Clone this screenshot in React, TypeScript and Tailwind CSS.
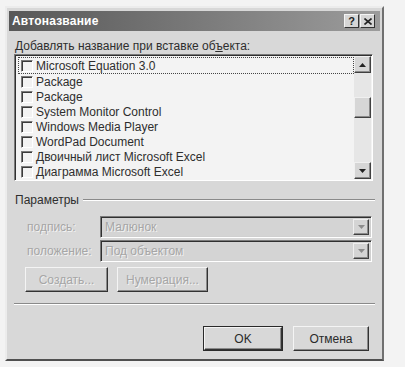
import React from "react";

const items = [
  "Microsoft Equation 3.0",
  "Package",
  "Package",
  "System Monitor Control",
  "Windows Media Player",
  "WordPad Document",
  "Двоичный лист Microsoft Excel",
  "Диаграмма Microsoft Excel",
];

function Check() {
  return (
    <span className="block w-[12px] h-[12px] shrink-0 border border-t-[#7a7a7a] border-l-[#7a7a7a] border-r-white border-b-white shadow-[inset_1px_1px_0_#3a3a3a] bg-[#f2f2f2]" />
  );
}

function ScrollBtn({ down }: { down?: boolean }) {
  return (
    <div className="h-[17px] w-[17px] flex items-center justify-center bg-[#d6d6d6] border border-t-[#f0f0f0] border-l-[#f0f0f0] border-r-[#404040] border-b-[#404040] shadow-[inset_-1px_-1px_0_#8a8a8a]">
      <svg width="7" height="4" viewBox="0 0 7 4">
        {down ? (
          <path d="M0 0H7L3.5 4Z" fill="#222" />
        ) : (
          <path d="M0 4H7L3.5 0Z" fill="#222" />
        )}
      </svg>
    </div>
  );
}

function Combo({ text }: { text: string }) {
  return (
    <div className="w-[272px] h-[22px] flex items-stretch border border-t-[#7a7a7a] border-l-[#7a7a7a] border-r-white border-b-white shadow-[inset_1px_1px_0_#303030,inset_-1px_-1px_0_#d0d0d0] bg-[#d4d4d4] p-[2px]">
      <span className="flex-1 pl-[2px] text-[#a6a6a6] leading-[16px] [text-shadow:1px_1px_0_#f2f2f2]">{text}</span>
      <div className="w-[16px] flex items-center justify-center border border-t-[#efefef] border-l-[#efefef] border-r-[#404040] border-b-[#404040] shadow-[inset_-1px_-1px_0_#8a8a8a]">
        <svg width="7" height="4" viewBox="0 0 7 4">
          <path d="M0 0H7L3.5 4Z" fill="#8c8c8c" />
        </svg>
      </div>
    </div>
  );
}

function Btn({ children, w, disabled, def }: { children: React.ReactNode; w: string; disabled?: boolean; def?: boolean }) {
  return (
    <div className={`${w} h-[25px] ${def ? "border border-[#2a2a2a]" : ""}`}>
      <div className="w-full h-full flex items-center justify-center border border-t-[#f4f4f4] border-l-[#f4f4f4] border-r-[#333] border-b-[#333] shadow-[inset_-1px_-1px_0_#8a8a8a]">
        <span className={disabled ? "text-[#a6a6a6] [text-shadow:1px_1px_0_#f2f2f2]" : "text-[#2a2a2a]"}>{children}</span>
      </div>
    </div>
  );
}

export default function App() {
  return (
    <div
      className="w-[405px] h-[367px] bg-[#f3f3f3] pt-[6px] pl-[5px] overflow-hidden text-[12px] text-[#2e2e2e]"
      style={{ fontFamily: '"Liberation Sans", Arial, sans-serif' }}
    >
      <div className="w-[379px] h-[355px] bg-[#d8d8d8] border-2 border-t-[#ececec] border-l-[#ececec] border-r-[#707070] border-b-[#505050] p-[2px] flex flex-col">
        {/* Title bar */}
        <div className="h-[20px] mt-[1px] flex items-center pl-[3px] pr-[5px] bg-linear-to-r from-[#585858] to-[#9c9c9c]">
          <span className="text-white font-bold text-[12px] tracking-[0.2px]">Автоназвание</span>
          <div className="ml-auto flex gap-[1px]">
            <div className="w-[15px] h-[14px] flex items-center justify-center bg-[#d6d6d6] border border-t-[#f4f4f4] border-l-[#f4f4f4] border-r-[#333] border-b-[#333] text-[11px] font-bold leading-none text-[#222]">?</div>
            <div className="w-[15px] h-[14px] flex items-center justify-center bg-[#d6d6d6] border border-t-[#f4f4f4] border-l-[#f4f4f4] border-r-[#333] border-b-[#333]">
              <svg width="8" height="7" viewBox="0 0 8 7">
                <path d="M0.5 0.5L7.5 6.5M7.5 0.5L0.5 6.5" stroke="#222" strokeWidth="1.6" />
              </svg>
            </div>
          </div>
        </div>

        <div className="pl-[5px] pr-[5px]">
          <div className="mt-[8px] pl-[1px] leading-[14px]">Добавлять название при вставке об<u>ъ</u>екта:</div>

          {/* List */}
          <div className="mt-[1px] w-[359px] h-[127px] flex border border-t-[#7a7a7a] border-l-[#7a7a7a] border-r-white border-b-white shadow-[inset_1px_1px_0_#303030] bg-[#f3f3f3] p-[1px]">
            <div className="flex-1 pt-[1px] pl-[2px]">
              {items.map((t, i) => (
                <div
                  key={i}
                  className={`${i === 0 ? "h-[17px] border border-dotted border-[#444]" : "h-[15px] border border-transparent"} flex items-center gap-[3px] pl-[2px]`}
                >
                  <Check />
                  <span className="leading-[14px] whitespace-nowrap">{t}</span>
                </div>
              ))}
            </div>
            <div className="w-[17px] flex flex-col bg-[#e6e6e6]">
              <ScrollBtn />
              <div className="h-[24px]" />
              <div className="h-[21px] bg-[#d6d6d6] border border-t-[#f0f0f0] border-l-[#f0f0f0] border-r-[#404040] border-b-[#404040] shadow-[inset_-1px_-1px_0_#8a8a8a]" />
              <div className="flex-1" />
              <ScrollBtn down />
            </div>
          </div>

          {/* Group */}
          <div className="mt-[12px] flex items-center gap-[4px] pl-[1px]">
            <span className="leading-[14px]">Параметры</span>
            <div className="flex-1 border-t border-t-[#8a8a8a] border-b border-b-white" />
          </div>

          <div className="mt-[9px] flex flex-col gap-[2px]">
            <div className="flex items-center">
              <span className="w-[86px] pl-[13px] text-[#a6a6a6] [text-shadow:1px_1px_0_#f2f2f2]">подпись:</span>
              <Combo text="Малюнок" />
            </div>
            <div className="flex items-center">
              <span className="w-[86px] pl-[13px] text-[#a6a6a6] [text-shadow:1px_1px_0_#f2f2f2]">положение:</span>
              <Combo text="Под объектом" />
            </div>
          </div>

          <div className="mt-[5px] flex gap-[9px] pl-[11px]">
            <Btn w="w-[83px]" disabled>Создать...</Btn>
            <Btn w="w-[91px]" disabled>Нумерация...</Btn>
          </div>

          <div className="mt-[11px] border-t border-t-[#8a8a8a] border-b border-b-white" />

          <div className="mt-[21px] flex justify-end gap-[10px] pr-[6px]">
            <Btn w="w-[80px]" def>OK</Btn>
            <Btn w="w-[76px]">Отмена</Btn>
          </div>
        </div>
      </div>
    </div>
  );
}
